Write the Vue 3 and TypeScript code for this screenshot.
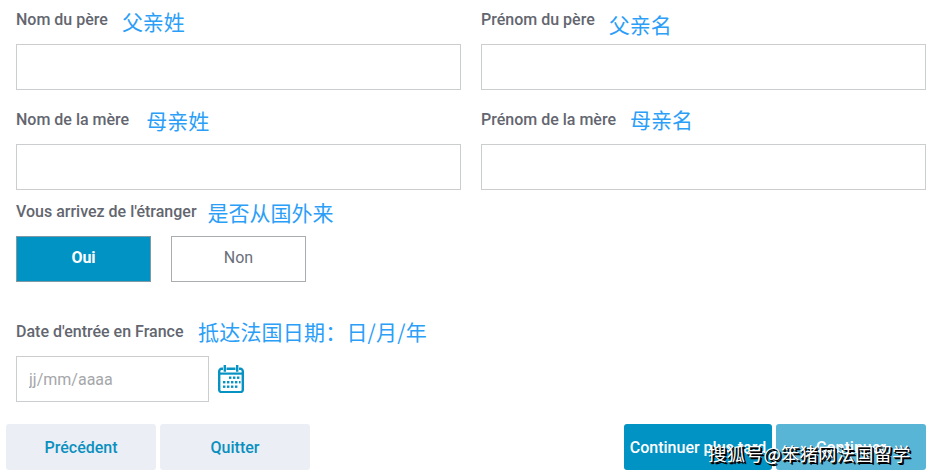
<script setup lang="ts">
interface Field {
  label: string
  note: string
  noteClass: string
}
const parents: Field[] = [
  { label: 'Nom du père', note: '父亲姓', noteClass: 'n1' },
  { label: 'Prénom du père', note: '父亲名', noteClass: 'n2' },
  { label: 'Nom de la mère', note: '母亲姓', noteClass: 'n3' },
  { label: 'Prénom de la mère', note: '母亲名', noteClass: 'n4' },
]
</script>

<template>
  <div class="page">
    <div class="grid">
      <div v-for="f in parents" :key="f.label" class="field">
        <div class="head">
          <span class="label">{{ f.label }}</span>
          <span class="note" :class="f.noteClass">{{ f.note }}</span>
        </div>
        <input class="input" type="text" />
      </div>
    </div>

    <div class="head h-toggle">
      <span class="label">Vous arrivez de l'étranger</span>
      <span class="note n5">是否从国外来</span>
    </div>
    <div class="toggle">
      <button class="choice on">Oui</button>
      <button class="choice">Non</button>
    </div>

    <div class="head h-date">
      <span class="label">Date d'entrée en France</span>
      <span class="note n6">抵达法国日期：日/月/年</span>
    </div>
    <div class="date">
      <input class="input date-input" type="text" placeholder="jj/mm/aaaa" />
      <svg class="cal" width="26" height="28" viewBox="0 0 26 28" fill="none">
        <path d="M5 3.8H3.6A2.4 2.4 0 0 0 1.2 6.2v18.6a2.4 2.4 0 0 0 2.4 2.4h18.8a2.4 2.4 0 0 0 2.4-2.4V6.2a2.4 2.4 0 0 0-2.4-2.4H21M8.5 3.8h9" stroke="#0693c4" stroke-width="2.4" />
        <path d="M1.2 8.6h23.6" stroke="#0693c4" stroke-width="2.2" />
        <path d="M6.8 0v6.8M19.2 0v6.8" stroke="#0693c4" stroke-width="2.4" />
        <g fill="#0693c4">
          <rect x="11" y="11.5" width="2.4" height="2.4" />
          <rect x="15" y="11.5" width="2.4" height="2.4" />
          <rect x="19" y="11.5" width="2.4" height="2.4" />
          <rect x="5" y="16" width="2.4" height="2.4" />
          <rect x="9" y="16" width="2.4" height="2.4" />
          <rect x="13" y="16" width="2.4" height="2.4" />
          <rect x="17" y="16" width="2.4" height="2.4" />
          <rect x="21" y="16" width="1.6" height="2.4" />
          <rect x="5" y="20.5" width="2.4" height="2.4" />
          <rect x="9" y="20.5" width="2.4" height="2.4" />
          <rect x="13" y="20.5" width="2.4" height="2.4" />
          <rect x="17" y="20.5" width="2.4" height="2.4" />
        </g>
      </svg>
    </div>

    <div class="actions">
      <div class="side">
        <button class="btn ghost">Précédent</button>
        <button class="btn ghost">Quitter</button>
      </div>
      <div class="side">
        <button class="btn primary wide">Continuer plus tard</button>
        <button class="btn muted">Continuer</button>
      </div>
    </div>

    <div class="watermark">搜狐号@笨猪网法国留学</div>
  </div>
</template>

<style>
html, body { margin: 0; background: #fff; }
</style>

<style scoped>
.page {
  position: relative;
  width: 933px;
  height: 475px;
  overflow: hidden;
  box-sizing: border-box;
  font-family: Roboto, "Noto Sans", sans-serif;
  color: #63666f;
}
.grid {
  display: grid;
  grid-template-columns: 445px 445px;
  column-gap: 20px;
  padding-left: 16px;
}
.field:nth-child(-n+2) .head { height: 44px; }
.field:nth-child(n+3) .head { height: 54px; }
.head {
  display: flex;
  align-items: flex-start;
  box-sizing: border-box;
}
.field:nth-child(-n+2) .label { margin-top: 11px; }
.field:nth-child(n+3) .label { margin-top: 21px; }
.label {
  font-size: 16px;
  font-weight: 500;
  line-height: 17px;
  white-space: nowrap;
}
.note {
  font-family: "Noto Sans CJK SC", sans-serif;
  font-size: 21px;
  font-weight: 400;
  line-height: 26px;
  color: #2b9ef8;
  white-space: nowrap;
}
.n1 { margin-left: 14px; margin-top: 8px; }
.n2 { margin-left: 14px; margin-top: 11px; }
.n3 { margin-left: 17px; margin-top: 17px; }
.n4 { margin-left: 14px; margin-top: 16px; }
.n5 { margin-left: 11px; margin-top: -4px; }
.n6 { margin-left: 14.5px; margin-top: -1px; letter-spacing: 0.2px; }
.input {
  display: block;
  box-sizing: border-box;
  width: 445px;
  height: 46px;
  border: 1px solid #cccdcf;
  border-radius: 0;
  background: #fff;
  outline: none;
  padding: 0 12px;
  margin: 0;
}
.h-toggle {
  height: 46px;
  padding-left: 16px;
  padding-top: 13px;
}
.toggle {
  display: flex;
  gap: 20px;
  padding-left: 16px;
}
.choice {
  width: 135px;
  height: 46px;
  box-sizing: border-box;
  border: 1px solid #a9adb0;
  background: #fff;
  color: #6a6e7a;
  font-family: inherit;
  font-size: 16px;
  padding: 0 0 4px;
}
.choice.on {
  background: #0093c4;
  border-color: #7f9aa5;
  color: #fff;
  font-weight: 700;
}
.h-date {
  height: 74px;
  padding-left: 16px;
  padding-top: 37px;
}
.h-date .label { margin-top: 4px; }
.date {
  display: flex;
  align-items: center;
  gap: 9px;
  padding-left: 16px;
}
.date-input {
  width: 193px;
  font-family: inherit;
  font-size: 16px;
}
.date-input::placeholder { color: #a5a7aa; opacity: 1; }
.actions {
  display: flex;
  justify-content: space-between;
  margin-top: 22px;
  padding: 0 7px 0 6px;
}
.side { display: flex; gap: 4px; }
.btn {
  width: 150px;
  height: 46px;
  border: none;
  border-radius: 3px;
  font-family: inherit;
  font-size: 16px;
  font-weight: 500;
  padding: 0;
  white-space: nowrap;
  overflow: hidden;
}
.ghost { background: #ebeef5; color: #0a90bf; }
.primary { background: #0093c4; color: #fff; }
.wide { width: 148px; }
.muted { background: #59b5d6; color: #fff; }
.watermark {
  position: absolute;
  left: 708px;
  top: 441px;
  font-family: "Noto Sans CJK SC", sans-serif;
  font-size: 18.5px;
  line-height: 24px;
  color: #fff;
  text-shadow: 1px 1px 0 #000, 2px 2px 0 #000;
  white-space: nowrap;
}
</style>
